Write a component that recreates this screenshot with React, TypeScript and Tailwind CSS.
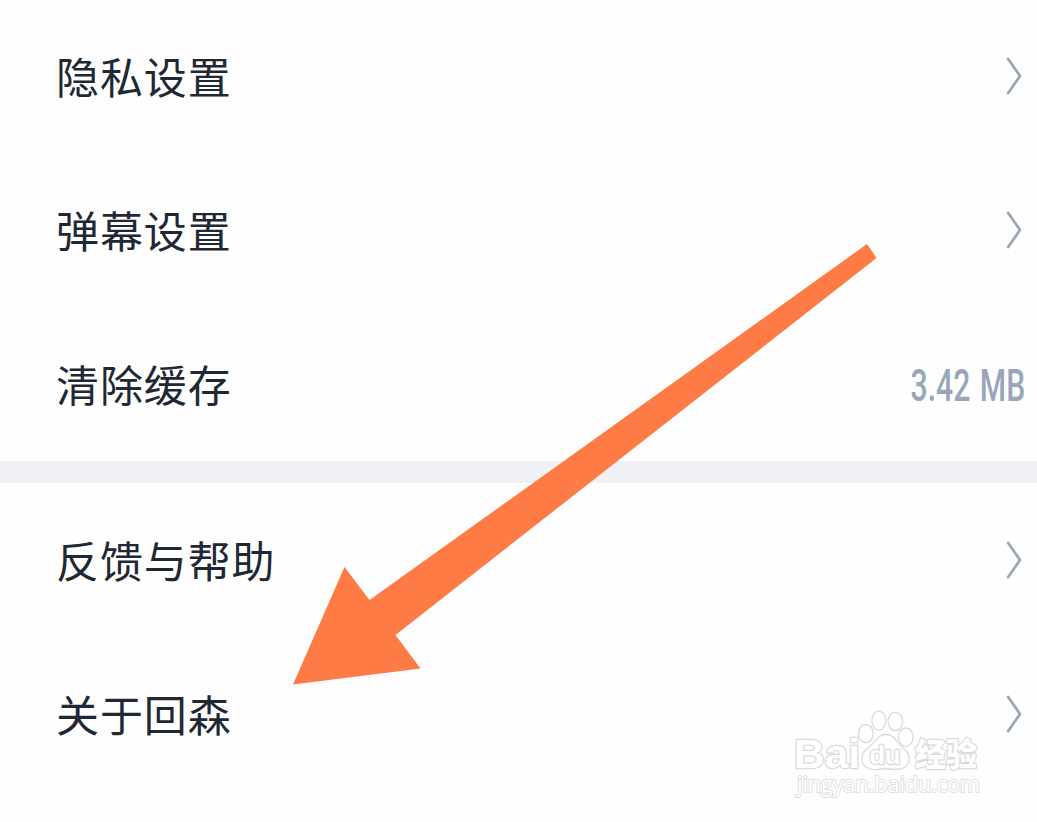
import React from 'react';

function Chevron() {
  return (
    <svg className="h-10 w-5 shrink-0" viewBox="0 0 20 40" fill="none">
      <path d="M4.2 3 L16 20 L4.2 37" stroke="#9aa8b6" strokeWidth="2.8" strokeLinecap="round" strokeLinejoin="round" />
    </svg>
  );
}

function Row({ label, value }: { label: string; value?: string }) {
  return (
    <div className="flex h-[154px] shrink-0 items-center justify-between pl-14 pr-[13px]">
      <span className="pb-0.5 font-['Noto_Sans_CJK_SC',sans-serif] text-[43px] leading-[60px] tracking-[0.9px] text-[#1f2833]">
        {label}
      </span>
      {value ? (
        <span className="-mr-px origin-right scale-x-[0.67] whitespace-nowrap pt-[3px] font-['Roboto',sans-serif] text-[45px] font-medium leading-[60px] text-[#97a6ba] [word-spacing:3px]">
          {value}
        </span>
      ) : (
        <Chevron />
      )}
    </div>
  );
}

function Arrow() {
  return (
    <svg className="absolute left-[293px] top-[243px]" width="584" height="442" viewBox="293 243 584 442">
      <path d="M293 684.5 L344.5 567 L369.5 600 L867 244 L876.5 258 L395.5 635 L420.5 668.5 Z" fill="#ff7b45" />
    </svg>
  );
}

function Watermark() {
  return (
    <svg className="absolute left-[785px] top-[700px]" width="205" height="105" viewBox="785 700 205 105">
      <g fill="#fff" stroke="#dadada" strokeWidth="1.3" strokeLinejoin="round">
        <ellipse cx="865.8" cy="733.5" rx="7.3" ry="9.2" />
        <ellipse cx="878.8" cy="720.7" rx="6.9" ry="9.5" />
        <ellipse cx="895.3" cy="721.5" rx="7.3" ry="9.2" />
        <ellipse cx="905.8" cy="737.2" rx="7.3" ry="9.2" />
        <path d="M886 734.5 C877 734.5 875 743 868 748 C861 753 861 759 863 764 C867 771 877 770 886 768.5 C894 770 904 771 908 764 C911 757 908 752 903 748 C896 742 895 734.5 886 734.5 Z" />
      </g>
      <g fill="#fff" stroke="#dadada" strokeWidth="2.4" strokeLinejoin="round" paintOrder="stroke">
        <text x="794" y="768" fontSize="40" fontWeight="700" textLength="66" lengthAdjust="spacingAndGlyphs" fontFamily="Liberation Sans, sans-serif">Bai</text>
        <text x="869.5" y="763.5" fontSize="25" fontWeight="700" textLength="31" lengthAdjust="spacingAndGlyphs" fontFamily="Liberation Sans, sans-serif">du</text>
        <text x="915" y="765.5" fontSize="32" fontWeight="900" textLength="62" lengthAdjust="spacingAndGlyphs" fontFamily="Noto Sans CJK SC, sans-serif">经验</text>
      </g>
      <text x="797" y="792" fontSize="21" textLength="183" lengthAdjust="spacingAndGlyphs" fill="#fff" stroke="#e0e0e0" strokeWidth="2" paintOrder="stroke" fontFamily="Open Sans, sans-serif">jingyan.baidu.com</text>
    </svg>
  );
}

function App() {
  return (
    <div className="relative h-[822px] w-[1037px] overflow-hidden bg-[#fefefe]">
      <div className="flex h-[461px] flex-col justify-end overflow-hidden">
        <Row label="隐私设置" />
        <Row label="弹幕设置" />
        <Row label="清除缓存" value="3.42 MB" />
      </div>
      <div className="h-[22px] bg-[#eff1f5]" />
      <div className="flex flex-col">
        <Row label="反馈与帮助" />
        <Row label="关于回森" />
      </div>
      <Watermark />
      <Arrow />
    </div>
  );
}

export default App;
